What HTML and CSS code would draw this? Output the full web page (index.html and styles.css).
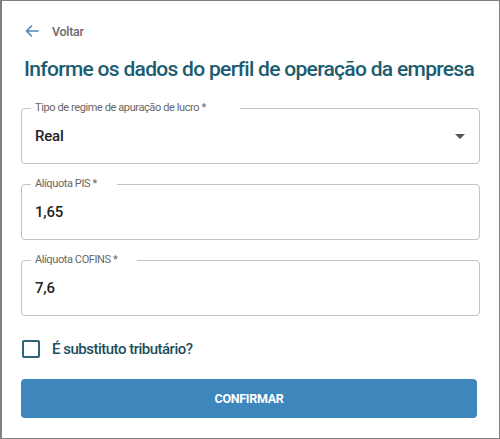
FILE: index.html
```html
<!DOCTYPE html>
<html lang="pt-BR">
<head>
<meta charset="utf-8">
<link rel="stylesheet" href="styles.css">
</head>
<body>
<div class="frame">
  <a class="back" href="#">
    <svg class="back-icon" width="14" height="12" viewBox="0 0 14 12"><path d="M13 6H1.5M6.5 1L1.5 6l5 5" fill="none" stroke="#4a86b8" stroke-width="1.6" stroke-linecap="round" stroke-linejoin="round"/></svg>
    <span>Voltar</span>
  </a>
  <h1 class="title">Informe os dados do perfil de operação da empresa</h1>
  <form class="form">
    <div class="field">
      <span class="label label-wide">Tipo de regime de apuração de lucro *</span>
      <span class="value">Real</span>
      <svg class="caret" width="10" height="5" viewBox="0 0 10 5"><path d="M0 0h10L5 5z" fill="#555"/></svg>
    </div>
    <div class="field">
      <span class="label">Alíquota PIS *</span>
      <span class="value">1,65</span>
    </div>
    <div class="field">
      <span class="label">Alíquota COFINS *</span>
      <span class="value">7,6</span>
    </div>
    <label class="check">
      <span class="box"></span>
      <span class="check-label">É substituto tributário?</span>
    </label>
    <button type="button" class="btn">CONFIRMAR</button>
  </form>
</div>
</body>
</html>
```
FILE: styles.css
```css
* { box-sizing: border-box; }
html, body { margin: 0; padding: 0; background: #fff; }
body {
  font-family: "Roboto", "Liberation Sans", sans-serif;
}
.frame {
  width: 500px;
  height: 439px;
  border: 1px solid #808080;
  border-left-width: 2px;
  padding: 22px 19px 0 19px;
}
.back {
  display: flex;
  align-items: center;
  gap: 13px;
  text-decoration: none;
  color: #6b6b6b;
  font-size: 12.5px;
  font-weight: 500;
  letter-spacing: -0.3px;
  height: 16px;
  padding-left: 4px;
}
.title {
  margin: 17px 0 0 3px;
  font-size: 21px;
  font-weight: 500;
  color: #1b5c70;
  line-height: 26px;
  letter-spacing: -0.7px;
  white-space: nowrap;
}
.form {
  margin-top: 26px;
  display: flex;
  flex-direction: column;
}
.field {
  position: relative;
  display: flex;
  align-items: center;
  justify-content: space-between;
  margin-bottom: 20px;
  border: 1px solid #c4c4c4;
  border-radius: 4px;
  padding: 0 13px 0 13px;
  height: 56px;
}
.label {
  position: absolute;
  top: -7px;
  left: 9px;
  padding: 0 20px 0 4px;
  background: #fff;
  font-size: 11px;
  line-height: 12px;
  color: #666;
  letter-spacing: -0.4px;
}
.label-wide { padding-right: 34px; }
.value {
  font-size: 15px;
  font-weight: 500;
  color: #222;
  letter-spacing: -0.2px;
}
.caret { margin-right: 1px; }
.check {
  display: flex;
  align-items: center;
  gap: 12px;
  margin: 4px 0 0 1px;
  height: 18px;
}
.box {
  width: 18px;
  height: 18px;
  border: 2px solid #2f6478;
  border-radius: 2px;
}
.check-label {
  font-size: 15px;
  font-weight: 500;
  color: #1d4f5e;
  letter-spacing: -0.5px;
}
.btn {
  margin-top: 21px;
  width: 456px;
  height: 39px;
  border: 0;
  border-radius: 4px;
  background: #3e87bd;
  color: #fff;
  font-family: inherit;
  font-size: 12.5px;
  font-weight: bold;
  letter-spacing: -0.3px;
}
```
